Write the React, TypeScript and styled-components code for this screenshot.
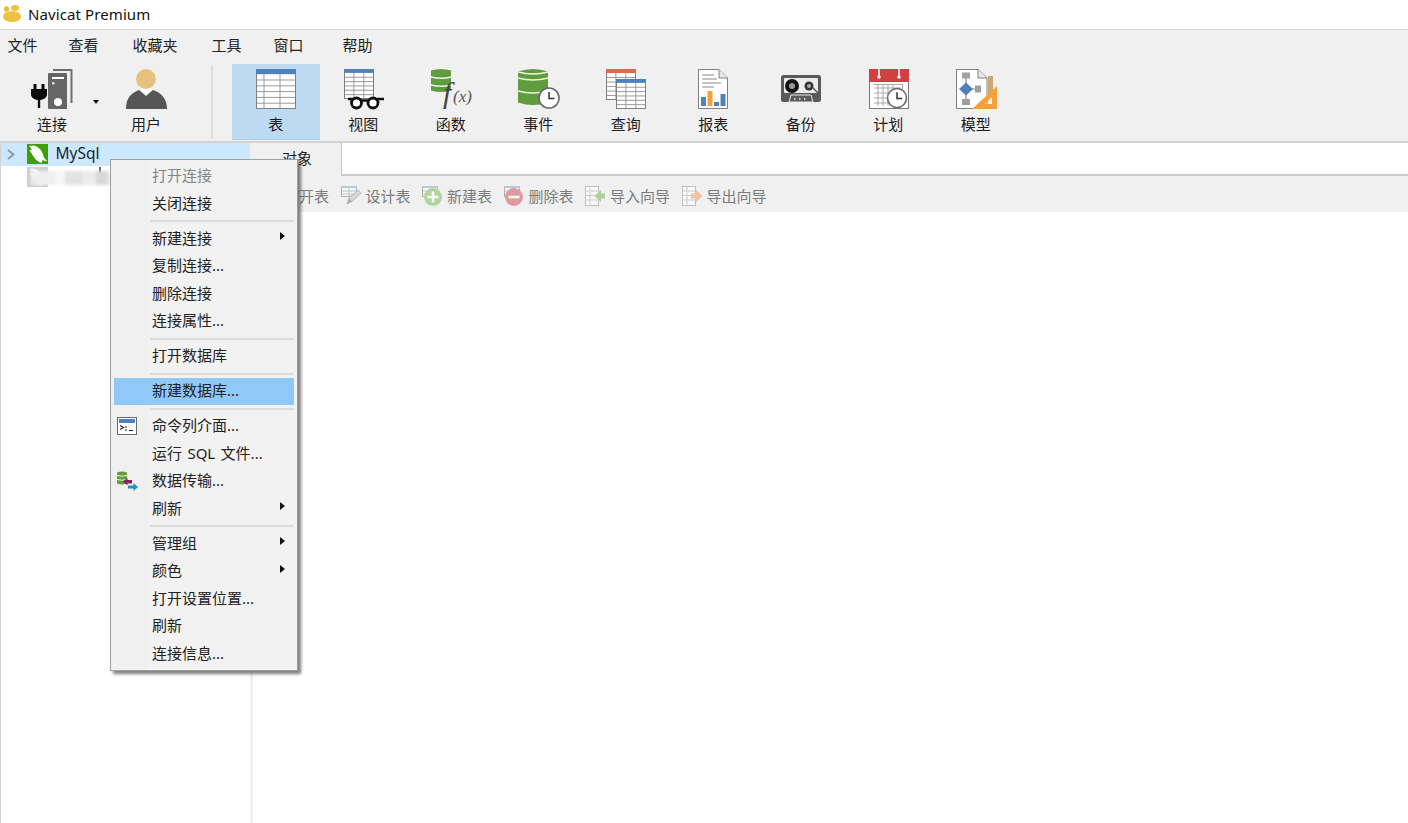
import React from 'react';
import styled, { createGlobalStyle } from 'styled-components';

const GlobalStyle = createGlobalStyle`
  html, body { margin: 0; padding: 0; background: #fff; }
  body { font-family: "Noto Sans", "Noto Sans CJK SC", sans-serif; font-size: 15px; color: #222; }
`;

const Page = styled.div`
  position: relative;
  width: 1408px;
  height: 823px;
  overflow: hidden;
  display: flex;
  flex-direction: column;
  background: #fff;
`;

const TitleBar = styled.div`
  height: 29px;
  box-sizing: border-box;
  padding: 0 0 2px 3px;
  display: flex;
  align-items: center;
  gap: 7px;
  color: #111;
  font-size: 15px;
  letter-spacing: 0.1px;
`;

const MenuBar = styled.div`
  height: 33px;
  box-sizing: border-box;
  display: flex;
  align-items: center;
  padding: 0 0 3px 7.5px;
  background: #f0f0f0;
  border-top: 1px solid #d4d4d4;
  font-size: 15px;
  color: #222;
`;

const MenuLabel = styled.span<{ $gap: number }>`
  margin-left: ${p => p.$gap}px;
`;

const Toolbar = styled.div`
  height: 77px;
  padding-top: 2px;
  display: flex;
  background: #f0f0f0;
  border-bottom: 2px solid #d2d2d2;
`;

const ToolItem = styled.div<{ $active?: boolean; $width?: number }>`
  position: relative;
  width: ${p => p.$width ?? 87.5}px;
  height: 76px;
  box-sizing: border-box;
  padding-top: 3px;
  display: flex;
  flex-direction: column;
  align-items: center;
  background: ${p => (p.$active ? '#bcdaf2' : 'transparent')};
  border-bottom: 1px solid ${p => (p.$active ? '#a6cdee' : 'transparent')};
  svg { display: block; }
`;

const ToolLabel = styled.span`
  margin-top: 2px;
  line-height: 22px;
  font-size: 15px;
  color: #1c1c1c;
`;

const ConnectGroup = styled.div`
  display: flex;
  gap: 6px;
  padding-left: 8px;
`;

const ToolSeparator = styled.div`
  width: 2px;
  height: 74px;
  margin: 1px 19px 0 21px;
  background: #dedede;
`;

const Caret = styled.span`
  position: absolute;
  left: 85px;
  top: 36px;
  border-left: 3.5px solid transparent;
  border-right: 3.5px solid transparent;
  border-top: 4px solid #111;
`;

const Main = styled.div`
  flex: 1;
  display: flex;
  min-height: 0;
`;

const Sidebar = styled.div`
  width: 250px;
  box-sizing: border-box;
  border-left: 1px solid #d0d0d0;
`;

const TreeRow = styled.div<{ $selected?: boolean }>`
  position: relative;
  height: 22.5px;
  display: flex;
  align-items: center;
  padding-left: 6px;
  background: ${p => (p.$selected ? '#cce8ff' : 'transparent')};
`;

const Chevron = styled.svg`
  width: 8px;
  height: 11px;
  margin-right: 12px;
`;

const TreeIcon = styled.svg`
  width: 21px;
  height: 20px;
`;

const TreeText = styled.span`
  margin: 0 0 3px 7.5px;
  font-size: 15.5px;
  color: #1a2530;
`;

const Smudge = styled.div`
  position: absolute;
  left: 30px;
  top: 5px;
  width: 86px;
  height: 14px;
  filter: blur(1.5px);
  background: linear-gradient(90deg, #efefef 0 28%, #f6f6f6 28% 40%, #e2e2e2 40% 60%, #ececec 60% 76%, #d8d8d8 76% 90%, #f0f0f0 90%);
`;

const Speck = styled.span`
  position: absolute;
  left: 98px;
  top: 1px;
  width: 2px;
  height: 6px;
  background: #666;
`;

const Splitter = styled.div`
  width: 3px;
  background: #f0f0f0;
`;

const Content = styled.div`
  flex: 1;
  display: flex;
  flex-direction: column;
`;

const TabRow = styled.div`
  height: 33px;
  display: flex;
  background: #f0f0f0;
`;

const Tab = styled.div`
  width: 88px;
  display: flex;
  align-items: center;
  justify-content: center;
  padding-bottom: 4px;
  box-sizing: border-box;
  font-size: 15px;
  color: #1c1c1c;
`;

const TabFill = styled.div`
  flex: 1;
  background: #fff;
  border-left: 1px solid #c4c4c4;
  border-bottom: 2px solid #cccccc;
`;

const ActionBar = styled.div`
  height: 36px;
  box-sizing: border-box;
  padding: 3px 0 0 5px;
  display: flex;
  align-items: center;
  gap: 10.5px;
  background: #f0f0f0;
`;

const Action = styled.div`
  display: flex;
  align-items: center;
  gap: 4px;
  font-size: 15px;
  color: #7c7c7c;
  svg { display: block; opacity: 0.55; }
`;

const ContextMenu = styled.div`
  position: absolute;
  left: 110px;
  top: 159px;
  width: 188px;
  height: 512px;
  box-sizing: border-box;
  padding: 2.5px 3px;
  border: 1px solid #a0a0a0;
  background: linear-gradient(90deg, #f0f0f0 37px, #f2f2f2 37px);
  box-shadow: 3px 3px 3px rgba(0, 0, 0, 0.5);
  font-size: 15px;
  word-spacing: 1.5px;
`;

const Entry = styled.div<{ $disabled?: boolean; $active?: boolean }>`
  height: 27.5px;
  box-sizing: border-box;
  padding-bottom: 3px;
  display: flex;
  align-items: center;
  color: ${p => (p.$disabled ? '#858585' : '#222')};
  background: ${p => (p.$active ? '#90c8f7' : 'transparent')};
`;

const EntryIcon = styled.span`
  width: 38px;
  flex: none;
  display: flex;
  padding-left: 3px;
  box-sizing: border-box;
  margin-bottom: -3px;
  svg { display: block; }
`;

const SubArrow = styled.span`
  margin: -2px 9px 0 auto;
  border-top: 4.5px solid transparent;
  border-bottom: 4.5px solid transparent;
  border-left: 5px solid #111;
`;

const EntrySeparator = styled.div`
  height: 7.5px;
  margin-left: 36px;
  display: flex;
  align-items: center;
  &::before {
    content: '';
    flex: 1;
    height: 2px;
    background: #dcdcdc;
  }
`;

// 小表格图标, 工具栏里好几个地方都在用
function Grid({ x, y, w, h, head, rows = 5, cols = [0.2, 0.6] }: { x: number; y: number; w: number; h: number; head: string; rows?: number; cols?: number[] }) {
  const headH = Math.max(2, h * 0.13);
  const lines: React.ReactNode[] = [];
  for (let i = 1; i <= rows; i++) {
    const ly = y + headH + ((h - headH) * i) / (rows + 1);
    lines.push(<line key={'r' + i} x1={x} x2={x + w} y1={ly} y2={ly} stroke="#9a9a9a" strokeWidth="1" />);
  }
  cols.forEach((c, i) => {
    lines.push(<line key={'c' + i} x1={x + w * c} x2={x + w * c} y1={y + headH} y2={y + h} stroke="#9a9a9a" strokeWidth="1" />);
  });
  return (
    <g>
      <rect x={x} y={y} width={w} height={h} fill="#fff" />
      {lines}
      <rect x={x + 0.5} y={y + 0.5} width={w - 1} height={h - 1} fill="none" stroke="#808080" />
      <rect x={x} y={y} width={w} height={headH} fill={head} />
    </g>
  );
}

// 绿色数据库圆柱
function Db({ x, y, w, h, bands, sw = 1.4 }: { x: number; y: number; w: number; h: number; bands: number[]; sw?: number }) {
  const dip = h * 0.07;
  return (
    <g>
      <path d={`M${x} ${y + dip} Q${x + w / 2} ${y - dip} ${x + w} ${y + dip} V${y + h - dip} Q${x + w / 2} ${y + h + dip} ${x} ${y + h - dip}Z`} fill="#5f9c3c" />
      {bands.map(b => (
        <path
          key={b}
          d={`M${x} ${y + b} Q${x + w / 2} ${y + b + dip * 1.6} ${x + w} ${y + b}`}
          fill="none"
          stroke="#eef3e8"
          strokeWidth={sw}
        />
      ))}
    </g>
  );
}

function Clock({ cx, cy, r }: { cx: number; cy: number; r: number }) {
  return (
    <g>
      <circle cx={cx} cy={cy} r={r} fill="#fff" stroke="#6a6a6a" strokeWidth="1.6" />
      <path d={`M${cx} ${cy - r * 0.6} V${cy + 0.5} H${cx + r * 0.55}`} fill="none" stroke="#333" strokeWidth="1.5" />
    </g>
  );
}

const Icon44 = ({ children }: { children: React.ReactNode }) => (
  <svg width="44" height="44" viewBox="0 0 44 44">{children}</svg>
);

const ConnectIcon = () => (
  <Icon44>
    <path d="M23 3H41.500V36" fill="none" stroke="#6e6e6e" strokeWidth="2" />
    <rect x="18" y="6" width="19" height="36" rx="1" fill="#666" />
    <rect x="22" y="10" width="12" height="2" fill="#fff" />
    <rect x="22" y="15" width="2.500" height="2.500" fill="#ddd" />
    <circle cx="28" cy="35" r="4" fill="#fff" />
    <path d="M3.500 17h3v5h5v-5h3v5H17v5.500C17 30 14.500 32.500 10.200 33V41H7.800V33C3.500 32.500 1 30 1 27.500V22h2.500z" fill="#0c0c0c" />
  </Icon44>
);

const UserIcon = () => (
  <Icon44>
    <path d="M2 42C2 31 7 26 15 23L22 29L29 23C38 26 43 32 43 42Z" fill="#565656" />
    <path d="M16 22L22 27L28 22L23 19H20Z" fill="#fff" />
    <circle cx="22" cy="12" r="10" fill="#e6c27e" />
  </Icon44>
);

const TableIcon = () => (
  <Icon44><Grid x={2} y={2} w={40} h={40} head="#4f81bd" /></Icon44>
);

const ViewIcon = () => (
  <Icon44>
    <Grid x={3} y={2} w={30} h={30} head="#4f81bd" cols={[0.33, 0.66]} />
    <path d="M7 32H13M36 32H43M20 33.500H27" fill="none" stroke="#111" strokeWidth="2.400" />
    <circle cx="15.500" cy="36" r="5" fill="#fff" stroke="#111" strokeWidth="2.800" />
    <circle cx="32" cy="36" r="5" fill="#fff" stroke="#111" strokeWidth="2.800" />
  </Icon44>
);

const FuncIcon = () => (
  <Icon44>
    <Db x={2} y={2} w={20} h={23} bands={[8, 16]} />
    <text x="14" y="36" fontFamily="Liberation Serif, serif" fontStyle="italic" fontSize="30" fill="#444">f</text>
    <text x="24" y="35" fontFamily="Liberation Serif, serif" fontStyle="italic" fontSize="17" fill="#555">(x)</text>
  </Icon44>
);

const EventIcon = () => (
  <Icon44>
    <Db x={2} y={2} w={30} h={36} bands={[3, 9, 22]} />
    <Clock cx={33} cy={31} r={10} />
  </Icon44>
);

const QueryIcon = () => (
  <Icon44>
    <Grid x={2} y={2} w={30} h={31} head="#e0694a" cols={[0.33, 0.66]} />
    <Grid x={12} y={12} w={30} h={30} head="#4f81bd" cols={[0.33, 0.66]} />
  </Icon44>
);

const ReportIcon = () => (
  <Icon44>
    <path d="M7.500 2.500H28L36.500 11V41.500H7.500Z" fill="#fff" stroke="#808080" />
    <path d="M28 2.500V11H36.500" fill="#e8e8e8" stroke="#808080" />
    <path d="M11 8h12M11 12h15M11 16h19M11 20h12" stroke="#8a8a8a" strokeWidth="1.200" />
    <rect x="10" y="30" width="5" height="9" fill="#4f81bd" />
    <rect x="16.500" y="24" width="5" height="15" fill="#f6a03c" />
    <rect x="23" y="35" width="5" height="4" fill="#4f81bd" />
    <rect x="29.500" y="27" width="5" height="12" fill="#4f81bd" />
  </Icon44>
);

const BackupIcon = () => (
  <Icon44>
    <rect x="2" y="8" width="40" height="27" rx="2.500" fill="#5a5a5a" />
    <rect x="5" y="11" width="34" height="15" rx="1" fill="#ececec" />
    <circle cx="13" cy="19" r="7" fill="#111" />
    <circle cx="13" cy="19" r="3" fill="#999" />
    <circle cx="30" cy="19" r="4.500" fill="#333" />
    <circle cx="30" cy="19" r="2" fill="#aaa" />
    <path d="M34 21L39 26" stroke="#555" strokeWidth="1.500" />
    <path d="M10 35L12 28H32L34 35Z" fill="#5a5a5a" stroke="#e8e8e8" strokeWidth="1" />
    <path d="M15 32h1.500M20 32h1.500M25 32h1.500" stroke="#e8e8e8" strokeWidth="1.500" />
  </Icon44>
);

const ScheduleIcon = () => (
  <Icon44>
    <rect x="3.500" y="8" width="39" height="33.500" fill="#fff" stroke="#777" />
    <rect x="3" y="2" width="40" height="13" fill="#d23f42" />
    <path d="M13 2V10M33 2V10" stroke="#f4f4f4" strokeWidth="1.600" />
    <circle cx="13" cy="10" r="1.800" fill="#f4f4f4" />
    <circle cx="33" cy="10" r="1.800" fill="#f4f4f4" />
    <path d="M8 21h27M8 26h24M8 31h20M8 36h20M12 17v22M17 17v22M22 17v22M27 17v22" stroke="#a8a8a8" strokeWidth="1" fill="none" />
    <path d="M7.500 17.500h29v5" fill="none" stroke="#a8a8a8" />
    <Clock cx={31} cy={31} r={9.500} />
  </Icon44>
);

const ModelIcon = () => (
  <Icon44>
    <path d="M2.500 2.500H24L33 11V41.500H2.500Z" fill="#fff" stroke="#808080" />
    <path d="M24 2.500V11H33" fill="#e8e8e8" stroke="#808080" />
    <path d="M12 9V35M12 22H24" stroke="#888" strokeWidth="1.200" />
    <rect x="8" y="5.500" width="8" height="6" fill="#a0a0a0" />
    <rect x="21" y="18.500" width="6" height="7" fill="#a0a0a0" />
    <rect x="8" y="32" width="8" height="6" fill="#a0a0a0" />
    <path d="M12 15.500L19 22L12 28.500L5 22Z" fill="#4f81bd" />
    <rect x="34" y="9" width="5" height="20" fill="#c9a877" />
    <path d="M43 42H18L43 19ZM38 37V30L31 37Z" fill="#f6a03c" fillRule="evenodd" />
  </Icon44>
);

const Icon22 = ({ children }: { children: React.ReactNode }) => (
  <svg width="22" height="22" viewBox="0 0 22 22">{children}</svg>
);

const SmallTable = () => <Grid x={1} y={1} w={16} h={11} head="#8aa8cc" rows={2} cols={[0.5]} />;

const ActOpen = () => <Icon22><SmallTable /></Icon22>;

const ActDesign = () => (
  <Icon22>
    <SmallTable />
    <path d="M7 19L9 13L18 5L21 8L12 16.500Z" fill="#c4c4c4" stroke="#8a8a8a" />
    <path d="M7 19L9 13L12 16.500Z" fill="#777" />
  </Icon22>
);

const ActNew = () => (
  <Icon22>
    <SmallTable />
    <circle cx="12" cy="12" r="9" fill="#7cbf5a" />
    <path d="M12 6.500V17.500M6.500 12H17.500" stroke="#fff" strokeWidth="2.600" />
  </Icon22>
);

const ActDelete = () => (
  <Icon22>
    <SmallTable />
    <circle cx="11" cy="12" r="9" fill="#d0565a" />
    <path d="M5.500 12H16.500" stroke="#fff" strokeWidth="2.600" />
  </Icon22>
);

const ActImport = () => (
  <Icon22>
    <rect x="1.500" y="1.500" width="13" height="19" fill="#fff" stroke="#999" />
    <path d="M1.500 6h13M1.500 10.500h13M1.500 15h13M6 1.500v19" stroke="#b0b0b0" />
    <path d="M21 8.500H17V5L10.500 11L17 17V13.500H21Z" fill="#78b956" />
  </Icon22>
);

const ActExport = () => (
  <Icon22>
    <rect x="1.500" y="1.500" width="13" height="19" fill="#fff" stroke="#999" />
    <path d="M1.500 6h13M1.500 10.500h13M1.500 15h13M6 1.500v19" stroke="#b0b0b0" />
    <path d="M10 8.500H15V5L21.500 11L15 17V13.500H10Z" fill="#eea35e" />
  </Icon22>
);

const TerminalIcon = () => (
  <svg width="20" height="18" viewBox="0 0 20 18">
    <rect x="0.500" y="0.500" width="19" height="17" fill="#fff" stroke="#6a6a6a" />
    <rect x="2" y="2" width="16" height="4" fill="#4f81bd" />
    <path d="M3 8.500L6.500 10.500L3 12.500M8 10h2M8 13h2M12 13.500h4" fill="none" stroke="#222" strokeWidth="1.100" />
  </svg>
);

const TransferIcon = () => (
  <svg width="21" height="21" viewBox="0 0 21 21">
    <Db x={0} y={0.5} w={10} h={13} bands={[4, 8]} sw={1} />
    <path d="M6 10.500L10.500 7V9H15V12.500H10.500V14.500Z" fill="#8e1f62" />
    <path d="M21 16L16.500 12V14.500H11V17.500H16.500V20Z" fill="#1c93b8" />
  </svg>
);

const DolphinIcon = ({ bg, fg }: { bg: string; fg: string }) => (
  <TreeIcon viewBox="0 0 21 20">
    <rect width="21" height="20" fill={bg} />
    <path d="M2 2L7.500 1.500C11.500 3 15 6.500 16 10.500C16.500 13 18 15 20 17C18 17 16.500 16.500 15.500 16L14.500 19C11 18 8.500 15.500 6.500 12.500C5 10 4 8 2.500 6.500L5 5.500Z" fill={fg} />
  </TreeIcon>
);

const NavicatLogo = () => (
  <svg width="18" height="17" viewBox="0 0 18 17">
    <ellipse cx="9" cy="11.500" rx="9" ry="5.500" fill="#f0c040" />
    <ellipse cx="3.500" cy="4" rx="2.500" ry="2.800" fill="#e8b830" />
    <ellipse cx="12" cy="3" rx="4" ry="3" fill="#f0c040" />
  </svg>
);

const menus = [
  { label: '文件', gap: 0 },
  { label: '查看', gap: 31 },
  { label: '收藏夹', gap: 34 },
  { label: '工具', gap: 34 },
  { label: '窗口', gap: 32 },
  { label: '帮助', gap: 39 },
];

const tools = [
  { label: '表', icon: <TableIcon />, active: true },
  { label: '视图', icon: <ViewIcon /> },
  { label: '函数', icon: <FuncIcon /> },
  { label: '事件', icon: <EventIcon /> },
  { label: '查询', icon: <QueryIcon /> },
  { label: '报表', icon: <ReportIcon /> },
  { label: '备份', icon: <BackupIcon /> },
  { label: '计划', icon: <ScheduleIcon /> },
  { label: '模型', icon: <ModelIcon /> },
];

const actions = [
  { label: '打开表', icon: <ActOpen /> },
  { label: '设计表', icon: <ActDesign /> },
  { label: '新建表', icon: <ActNew /> },
  { label: '删除表', icon: <ActDelete /> },
  { label: '导入向导', icon: <ActImport /> },
  { label: '导出向导', icon: <ActExport /> },
];

type MenuEntry = { label?: string; disabled?: boolean; active?: boolean; sub?: boolean; icon?: React.ReactNode };

const entries: MenuEntry[] = [
  { label: '打开连接', disabled: true },
  { label: '关闭连接' },
  {},
  { label: '新建连接', sub: true },
  { label: '复制连接...' },
  { label: '删除连接' },
  { label: '连接属性...' },
  {},
  { label: '打开数据库' },
  {},
  { label: '新建数据库...', active: true },
  {},
  { label: '命令列介面...', icon: <TerminalIcon /> },
  { label: '运行 SQL 文件...' },
  { label: '数据传输...', icon: <TransferIcon /> },
  { label: '刷新', sub: true },
  {},
  { label: '管理组', sub: true },
  { label: '颜色', sub: true },
  { label: '打开设置位置...' },
  { label: '刷新' },
  { label: '连接信息...' },
];

export default function App() {
  return (
    <Page>
      <GlobalStyle />
      <TitleBar>
        <NavicatLogo />
        Navicat Premium
      </TitleBar>
      <MenuBar>
        {menus.map(m => (
          <MenuLabel key={m.label} $gap={m.gap}>{m.label}</MenuLabel>
        ))}
      </MenuBar>
      <Toolbar>
        <ConnectGroup>
          <ToolItem $width={88}>
            <ConnectIcon />
            <ToolLabel>连接</ToolLabel>
            <Caret />
          </ToolItem>
          <ToolItem $width={88}>
            <UserIcon />
            <ToolLabel>用户</ToolLabel>
          </ToolItem>
        </ConnectGroup>
        <ToolSeparator />
        {tools.map(t => (
          <ToolItem key={t.label} $active={t.active}>
            {t.icon}
            <ToolLabel>{t.label}</ToolLabel>
          </ToolItem>
        ))}
      </Toolbar>
      <Main>
        <Sidebar>
          <TreeRow $selected>
            <Chevron viewBox="0 0 8 11">
              <path d="M1 1L6.500 5.500L1 10" fill="none" stroke="#8798a6" strokeWidth="2" />
            </Chevron>
            <DolphinIcon bg="#3f9f0a" fg="#fff" />
            <TreeText>MySql</TreeText>
          </TreeRow>
          <TreeRow>
            <Chevron viewBox="0 0 8 11" />
            <DolphinIcon bg="#cfcfcf" fg="#f4f4f4" />
            <Speck />
            <Smudge />
          </TreeRow>
        </Sidebar>
        <Splitter />
        <Content>
          <TabRow>
            <Tab>对象</Tab>
            <TabFill />
          </TabRow>
          <ActionBar>
            {actions.map(a => (
              <Action key={a.label}>
                {a.icon}
                {a.label}
              </Action>
            ))}
          </ActionBar>
        </Content>
      </Main>
      <ContextMenu>
        {entries.map((e, i) =>
          e.label ? (
            <Entry key={i} $disabled={e.disabled} $active={e.active}>
              <EntryIcon>{e.icon}</EntryIcon>
              {e.label}
              {e.sub && <SubArrow />}
            </Entry>
          ) : (
            <EntrySeparator key={i} />
          )
        )}
      </ContextMenu>
    </Page>
  );
}
